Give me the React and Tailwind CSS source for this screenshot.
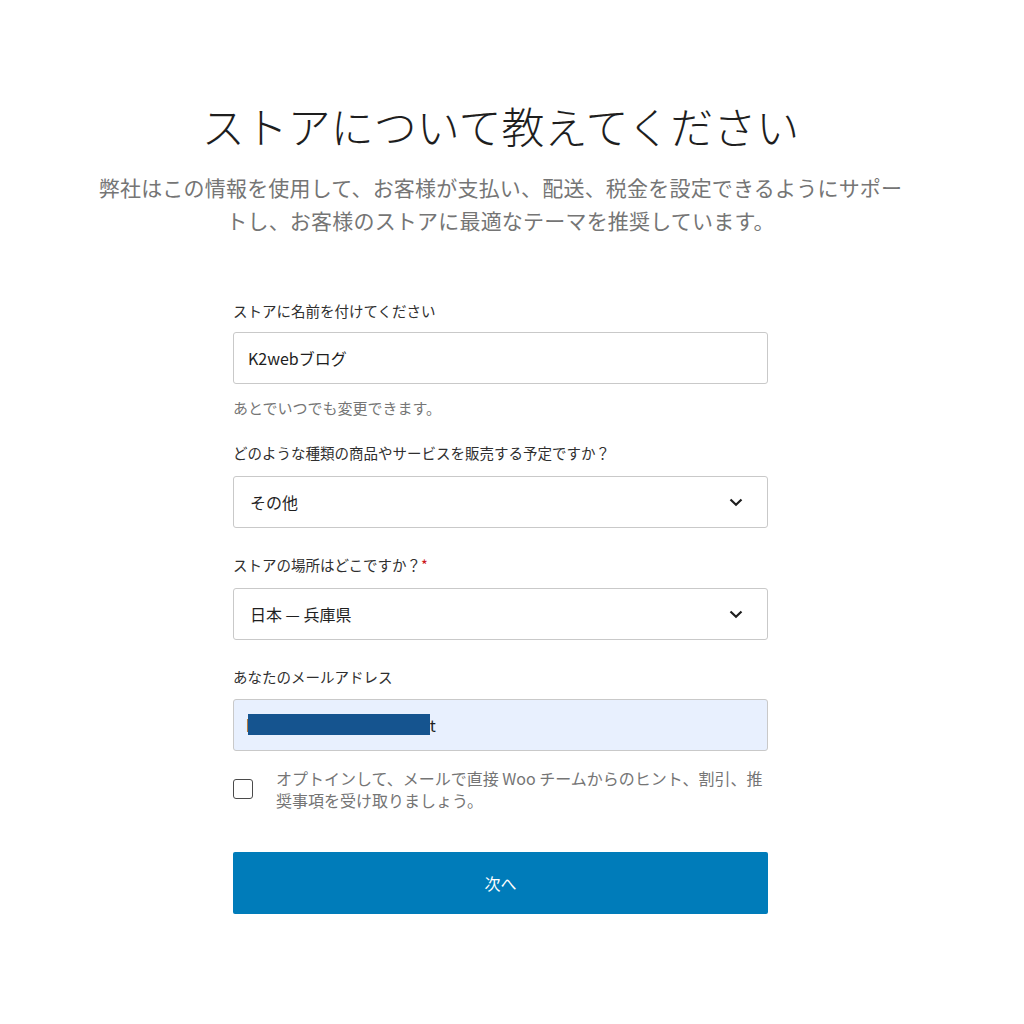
import React from "react";

const font = { fontFamily: '"Noto Sans CJK JP", "Noto Sans", sans-serif' };

function Chevron() {
  return (
    <svg width="14" height="9" viewBox="0 0 14 9" fill="none">
      <path d="M1.5 1.5 L7 6.8 L12.5 1.5" stroke="#1e1e1e" strokeWidth="2.2" />
    </svg>
  );
}

function Select({ value }) {
  return (
    <div className="flex h-[52px] items-center justify-between rounded-[3px] border border-[#c9c9c9] bg-white pl-[16px] pr-[24px] text-[16px] text-[#1e1e1e]">
      <span>{value}</span>
      <Chevron />
    </div>
  );
}

export default function App() {
  return (
    <div className="min-h-[1024px] w-full bg-white" style={font}>
      <div className="flex w-full flex-col items-center pr-[23px] pt-[100px]">
        <h1 className="text-[43px] font-light leading-[50px] text-[#1e1e1e]">
          ストアについて教えてください
        </h1>
        <p className="mt-[21px] text-center text-[21px] leading-[33px] tracking-[0.2px] text-[#757575]">
          弊社はこの情報を使用して、お客様が支払い、配送、税金を設定できるようにサポー
          <br />
          トし、お客様のストアに最適なテーマを推奨しています。
        </p>

        <div className="mt-[64px] flex w-[535px] flex-col">
          <label className="text-[14.5px] leading-[20px] text-[#2f2f2f]">ストアに名前を付けてください</label>
          <div className="mt-[11px] flex h-[52px] items-center rounded-[3px] border border-[#c9c9c9] bg-white px-[14px] text-[16px] text-[#1e1e1e]">
            K2webブログ
          </div>
          <p className="mt-[14px] text-[15px] leading-[20px] text-[#757575]">あとでいつでも変更できます。</p>

          <label className="mt-[25px] text-[14.5px] leading-[20px] text-[#2f2f2f]">
            どのような種類の商品やサービスを販売する予定ですか？
          </label>
          <div className="mt-[13px]">
            <Select value="その他" />
          </div>

          <label className="mt-[27px] text-[14.5px] leading-[20px] text-[#2f2f2f]">
            ストアの場所はどこですか？<span className="text-[#cc1818]">*</span>
          </label>
          <div className="mt-[13px]">
            <Select value="日本 — 兵庫県" />
          </div>

          <label className="mt-[27px] text-[14.5px] leading-[20px] text-[#2f2f2f]">あなたのメールアドレス</label>
          <div className="mt-[12px] flex h-[52px] items-center rounded-[3px] border border-[#c9c9c9] bg-[#e8f0fe] px-[12px] text-[16px] text-[#1e1e1e]">
            <span className="relative">
              k
              <span className="absolute left-[2px] top-[1px] h-[21px] w-[182px] bg-[#15548f]" />
            </span>
            <span className="inline-block w-[175px]" />
            <span>t</span>
          </div>

          <div className="mt-[16px] flex items-start">
            <div className="mt-[12px] h-[20px] w-[20px] shrink-0 rounded-[3px] border-[1.5px] border-[#4a4a4a] bg-white" />
            <p className="ml-[23px] text-[16px] leading-[22px] text-[#757575]">
              オプトインして、メールで直接 Woo チームからのヒント、割引、推
              <br />
              奨事項を受け取りましょう。
            </p>
          </div>

          <button className="mt-[41px] flex h-[62px] items-center justify-center rounded-[2px] bg-[#007cba] text-[16px] text-white">
            次へ
          </button>
        </div>
      </div>
    </div>
  );
}
